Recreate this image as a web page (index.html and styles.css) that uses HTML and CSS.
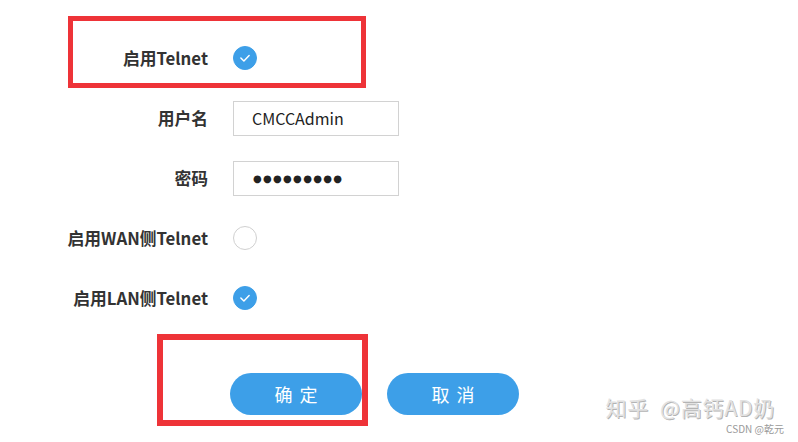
FILE: index.html
```html
<!DOCTYPE html>
<html lang="zh-CN">
<head>
	<meta charset="utf-8">
	<meta name="viewport" content="width=device-width, initial-scale=1">
	<title>Telnet 设置</title>
	<link rel="stylesheet" href="styles.css">
</head>
<body>
<div class="page">
	<form class="telnet-form">
		<label class="field-label">启用Telnet</label>
		<span class="radio checked"><svg viewBox="0 0 24 24"><polyline points="7.5,12 10.8,15.2 16.5,9.3"/></svg></span>

		<label class="field-label" for="user">用户名</label>
		<input class="field-input" id="user" type="text" value="CMCCAdmin">

		<label class="field-label" for="pass">密码</label>
		<input class="field-input pass" id="pass" type="text" value="●●●●●●●●●">

		<label class="field-label">启用WAN侧Telnet</label>
		<span class="radio"></span>

		<label class="field-label">启用LAN侧Telnet</label>
		<span class="radio checked"><svg viewBox="0 0 24 24"><polyline points="7.5,12 10.8,15.2 16.5,9.3"/></svg></span>

		<div class="actions">
			<button type="button" class="btn">确定</button>
			<button type="button" class="btn">取消</button>
		</div>
	</form>

	<!-- red highlight frames -->
	<div class="frame frame-telnet"></div>
	<div class="frame frame-ok"></div>

	<div class="watermark">
		<span class="wm-main">知乎&nbsp; @高钙AD奶</span>
		<span class="wm-sub">CSDN @乾元</span>
	</div>
</div>
</body>
</html>
```

FILE: styles.css
```css
html,body
{
	padding: 0;
	border: 0;
	margin: 0;
}

body
{
	background: #fff;
	font-family: "Noto Sans CJK SC", "Noto Sans", sans-serif;
	color: #333;
}

.page
{
	position: relative;
	width: 798px;
	height: 442px;
	overflow: hidden;
}

.telnet-form
{
	display: grid;
	grid-template-columns: 160px 1fr;
	grid-template-rows: repeat(5, 60px) auto;
	column-gap: 25px;
	align-items: center;
	padding: 28px 0 0 48px;
}

.field-label
{
	font-size: 16.8px;
	font-weight: 700;
	color: #333;
	text-align: right;
	white-space: nowrap;
}

.field-input
{
	box-sizing: border-box;
	width: 166px;
	height: 35px;
	padding: 0 0 0 18px;
	border: 1px solid #d2d2d2;
	margin: 0;
	font-family: "Noto Sans CJK SC", "Noto Sans", sans-serif;
	font-size: 16px;
	color: #222;
	outline: none;
}

.field-input.pass
{
	padding-left: 19px;
	font-family: "DejaVu Sans", sans-serif;
	font-size: 10px;
	letter-spacing: 1.3px;
}

.radio
{
	box-sizing: border-box;
	display: flex;
	width: 24px;
	height: 24px;
	border: 1px solid #d0d0d0;
	border-radius: 50%;
	background: #fff;
}

.radio.checked
{
	border-color: #3d9fe8;
	background: #3d9fe8;
}

.radio svg
{
	width: 100%;
	height: 100%;
	fill: none;
	stroke: #fff;
	stroke-width: 1.6;
	stroke-linecap: round;
	stroke-linejoin: round;
}

.actions
{
	grid-column: 2;
	align-self: start;
	display: flex;
	gap: 25px;
	margin: 45px 0 0 -3px;
}

.btn
{
	width: 132px;
	height: 42px;
	padding: 0 0 0 7px;
	border: 0;
	border-radius: 21px;
	background: #3d9fe8;
	color: #fff;
	font-family: "Noto Sans CJK SC", sans-serif;
	font-size: 18px;
	letter-spacing: 7px;
	cursor: pointer;
}

.frame
{
	position: absolute;
	box-sizing: border-box;
	border: 5px solid #ee3338;
	pointer-events: none;
}

.frame-telnet
{
	top: 16px;
	left: 68px;
	width: 298px;
	height: 72px;
}

.frame-ok
{
	top: 334px;
	left: 157px;
	width: 211px;
	height: 92px;
	border-width: 6px;
}

.watermark
{
	position: absolute;
	right: 14px;
	bottom: 8px;
	display: flex;
	flex-direction: column;
	align-items: flex-end;
	gap: 6px;
}

.wm-main
{
	margin-right: 9px;
	font-size: 21px;
	line-height: 21px;
	color: #e2e2e2;
	text-shadow: 1px 1px 0 #b4b4b4;
	letter-spacing: 0.8px;
}

.wm-sub
{
	font-size: 10px;
	line-height: 10px;
	color: #9a9a9a;
}
```
